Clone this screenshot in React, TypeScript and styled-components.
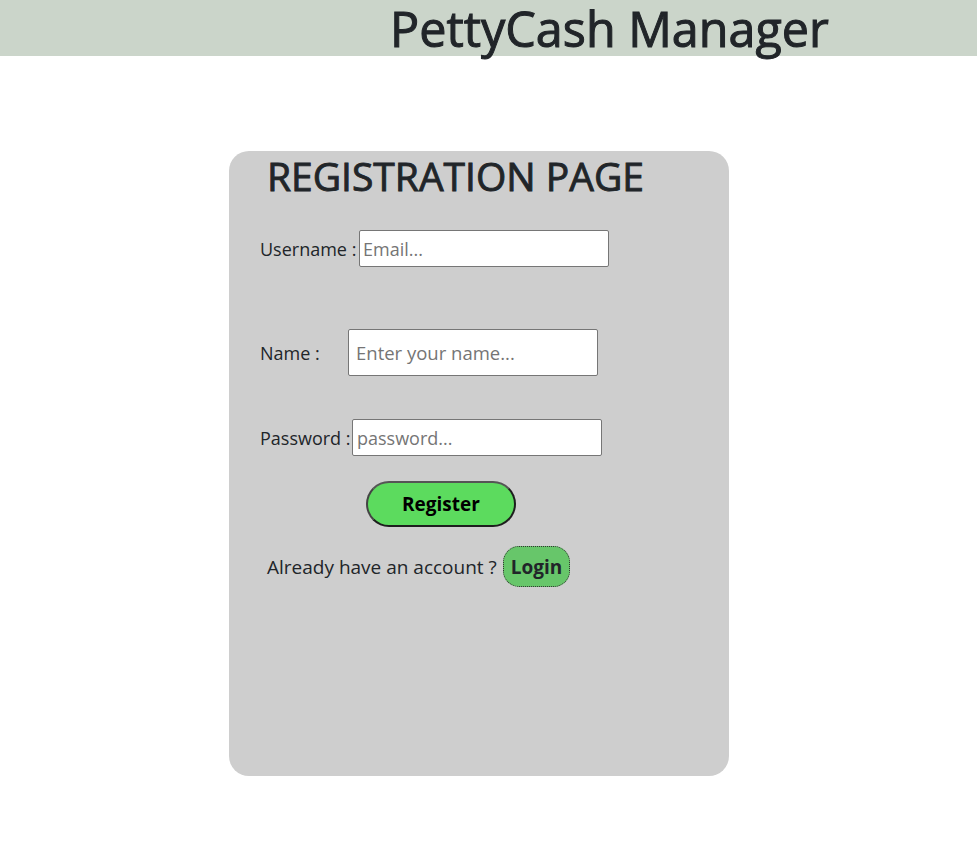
import { createGlobalStyle } from 'styled-components';
import styled from 'styled-components';

const GlobalStyle = createGlobalStyle`
    body {
        margin: 0;
        font-family: 'Open Sans', 'Noto Sans', sans-serif;
        color: #212529;
        background: #fff;
    }
    * {
        box-sizing: border-box;
    }
`;

const Header = styled.header`
    height: 56px;
    padding-left: 390px;
    background-color: #cbd5ca;
`;

const HeaderTitle = styled.h1`
    margin: 0;
    font-size: 48.5px;
    font-weight: 400;
    line-height: 56px;
    white-space: nowrap;
    -webkit-text-stroke: 1px currentColor;
`;

const Main = styled.main`
    padding: 95px 0 0 229px;
`;

const Card = styled.section`
    display: flex;
    flex-direction: column;
    width: 500px;
    height: 625px;
    padding: 4px 0 0 31px;
    border-radius: 20px;
    background-color: #cecece;
`;

const Title = styled.h2`
    margin: 0 0 0 7px;
    font-size: 39px;
    font-weight: 400;
    line-height: 41px;
    white-space: nowrap;
    -webkit-text-stroke: 0.9px currentColor;
`;

const Row = styled.div<{ $top: number }>`
    display: flex;
    align-items: center;
    margin-top: ${({ $top }) => $top}px;
`;

const Label = styled.label<{ $width: number }>`
    flex: 0 0 ${({ $width }) => $width}px;
    font-size: 18px;
    white-space: nowrap;
`;

const Input = styled.input<{ $tall?: boolean; $pad: number }>`
    width: 250px;
    height: ${({ $tall }) => ($tall ? 47 : 37)}px;
    padding: 0 ${({ $pad }) => $pad}px;
    border: 1px solid #767676;
    border-radius: 2px;
    background: #fff;
    font-family: inherit;
    font-size: ${({ $tall }) => ($tall ? 18.5 : 18)}px;
    color: #212529;

    &::placeholder {
        color: #757575;
    }
`;

const RegisterButton = styled.button`
    width: 150px;
    height: 46px;
    margin: 25px 0 0 106px;
    border: 2px solid #1e1e1e;
    border-top-color: #555;
    border-left-color: #444;
    border-radius: 23px;
    background-color: #5cdb5e;
    font-family: inherit;
    font-size: 19px;
    font-weight: 700;
    color: #000;
    cursor: pointer;
`;

const Footer = styled.div`
    display: flex;
    align-items: center;
    gap: 6px;
    margin: 19px 0 0 7px;
    font-size: 19px;
`;

const LoginButton = styled.button`
    height: 41px;
    padding: 0 7px;
    border: 1px dotted #333;
    border-radius: 16px;
    background-color: #67c66a;
    font-family: inherit;
    font-size: 19px;
    font-weight: 700;
    color: #212529;
    cursor: pointer;
`;

export default function App() {
    return (
        <>
            <GlobalStyle />
            <Header>
                <HeaderTitle>PettyCash Manager</HeaderTitle>
            </Header>
            <Main>
                <Card>
                    <Title>REGISTRATION PAGE</Title>
                    <Row $top={34}>
                        <Label $width={99} htmlFor="username">
                            Username :
                        </Label>
                        <Input id="username" type="email" placeholder="Email..." $pad={3} />
                    </Row>
                    <Row $top={62}>
                        <Label $width={88} htmlFor="name">
                            Name :
                        </Label>
                        <Input id="name" type="text" placeholder="Enter your name..." $tall $pad={7} />
                    </Row>
                    <Row $top={43}>
                        <Label $width={92} htmlFor="password">
                            Password :
                        </Label>
                        <Input id="password" type="password" placeholder="password..." $pad={4} />
                    </Row>
                    <div>
                        <RegisterButton type="button">Register</RegisterButton>
                    </div>
                    <Footer>
                        Already have an account ?
                        <LoginButton type="button">Login</LoginButton>
                    </Footer>
                </Card>
            </Main>
        </>
    );
}
